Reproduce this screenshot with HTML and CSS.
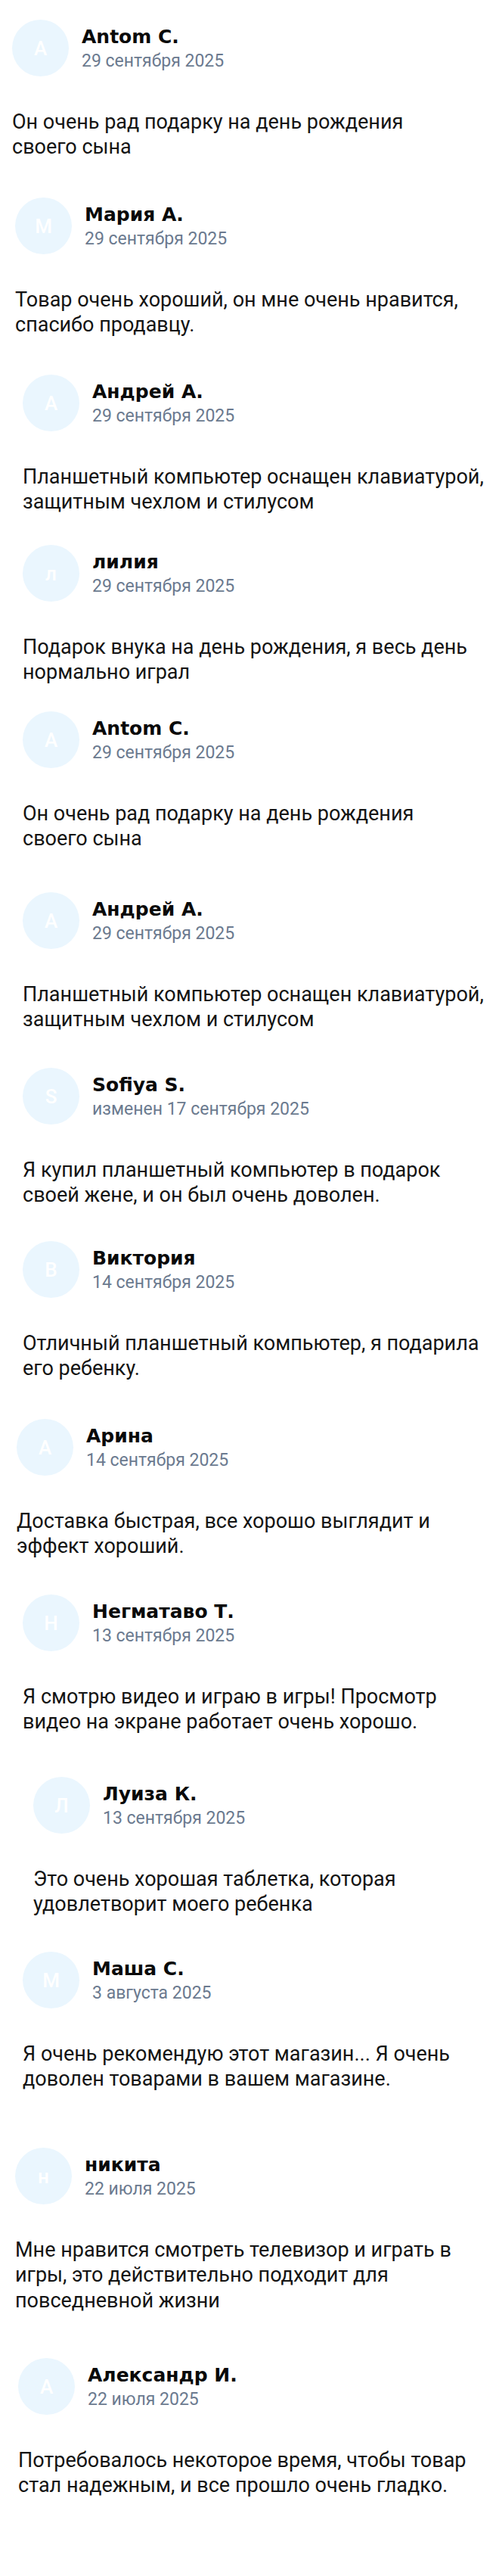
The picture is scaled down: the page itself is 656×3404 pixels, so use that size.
FILE: index.html
```html
<!DOCTYPE html>
<html lang="ru">
<head>
<meta charset="utf-8">
<title>Отзывы</title>
<link rel="stylesheet" href="styles.css">
</head>
<body>
<main class="sheet">
  <article class="review in-16 first">
    <header class="head"><div class="avatar">A</div><div class="meta"><div class="name">Antom C.</div><div class="date">29 сентября 2025</div></div></header>
    <p class="text">Он очень рад подарку на день рождения<br>своего сына</p>
  </article>
  <article class="review in-20 gap-50">
    <header class="head"><div class="avatar">М</div><div class="meta"><div class="name">Мария А.</div><div class="date">29 сентября 2025</div></div></header>
    <p class="text">Товар очень хороший, он мне очень нравится,<br>спасибо продавцу.</p>
  </article>
  <article class="review in-30 gap-48">
    <header class="head"><div class="avatar">А</div><div class="meta"><div class="name">Андрей А.</div><div class="date">29 сентября 2025</div></div></header>
    <p class="text">Планшетный компьютер оснащен клавиатурой,<br>защитным чехлом и стилусом</p>
  </article>
  <article class="review in-30 gap-40">
    <header class="head"><div class="avatar">л</div><div class="meta"><div class="name">лилия</div><div class="date">29 сентября 2025</div></div></header>
    <p class="text">Подарок внука на день рождения, я весь день<br>нормально играл</p>
  </article>
  <article class="review in-30 gap-34">
    <header class="head"><div class="avatar">A</div><div class="meta"><div class="name">Antom C.</div><div class="date">29 сентября 2025</div></div></header>
    <p class="text">Он очень рад подарку на день рождения<br>своего сына</p>
  </article>
  <article class="review in-30 gap-54">
    <header class="head"><div class="avatar">А</div><div class="meta"><div class="name">Андрей А.</div><div class="date">29 сентября 2025</div></div></header>
    <p class="text">Планшетный компьютер оснащен клавиатурой,<br>защитным чехлом и стилусом</p>
  </article>
  <article class="review in-30 gap-46">
    <header class="head"><div class="avatar">S</div><div class="meta"><div class="name">Sofiya S.</div><div class="date">изменен 17 сентября 2025</div></div></header>
    <p class="text">Я купил планшетный компьютер в подарок<br>своей жене, и он был очень доволен.</p>
  </article>
  <article class="review in-30 gap-44">
    <header class="head"><div class="avatar">В</div><div class="meta"><div class="name">Виктория</div><div class="date">14 сентября 2025</div></div></header>
    <p class="text">Отличный планшетный компьютер, я подарила<br>его ребенку.</p>
  </article>
  <article class="review in-22 gap-50">
    <header class="head"><div class="avatar">А</div><div class="meta"><div class="name">Арина</div><div class="date">14 сентября 2025</div></div></header>
    <p class="text">Доставка быстрая, все хорошо выглядит и<br>эффект хороший.</p>
  </article>
  <article class="review in-30 gap-46">
    <header class="head"><div class="avatar">Н</div><div class="meta"><div class="name">Негматаво Т.</div><div class="date">13 сентября 2025</div></div></header>
    <p class="text">Я смотрю видео и играю в игры! Просмотр<br>видео на экране работает очень хорошо.</p>
  </article>
  <article class="review in-44 gap-56">
    <header class="head"><div class="avatar">Л</div><div class="meta"><div class="name">Луиза К.</div><div class="date">13 сентября 2025</div></div></header>
    <p class="text">Это очень хорошая таблетка, которая<br>удовлетворит моего ребенка</p>
  </article>
  <article class="review in-30 gap-45">
    <header class="head"><div class="avatar">М</div><div class="meta"><div class="name">Маша С.</div><div class="date">3 августа 2025</div></div></header>
    <p class="text">Я очень рекомендую этот магазин... Я очень<br>доволен товарами в вашем магазине.</p>
  </article>
  <article class="review in-20 gap-74">
    <header class="head"><div class="avatar">н</div><div class="meta"><div class="name">никита</div><div class="date">22 июля 2025</div></div></header>
    <p class="text">Мне нравится смотреть телевизор и играть в<br>игры, это действительно подходит для<br>повседневной жизни</p>
  </article>
  <article class="review in-24 gap-59">
    <header class="head"><div class="avatar">А</div><div class="meta"><div class="name">Александр И.</div><div class="date">22 июля 2025</div></div></header>
    <p class="text">Потребовалось некоторое время, чтобы товар<br>стал надежным, и все прошло очень гладко.</p>
  </article>
</main>
</body>
</html>
```

FILE: styles.css
```css
html, body {
  margin: 0;
  padding: 0;
  background: #ffffff;
}

.sheet {
  width: 656px;
  display: flex;
  flex-direction: column;
}

.review {
  display: flex;
  flex-direction: column;
}

.first  { margin-top: 26px; }
.gap-34 { margin-top: 34.5px; }
.gap-40 { margin-top: 39.5px; }
.gap-44 { margin-top: 43.5px; }
.gap-45 { margin-top: 45.5px; }
.gap-46 { margin-top: 46.5px; }
.gap-48 { margin-top: 48.5px; }
.gap-50 { margin-top: 49.5px; }
.gap-54 { margin-top: 53.5px; }
.gap-56 { margin-top: 55.5px; }
.gap-59 { margin-top: 59px; }
.gap-74 { margin-top: 73.5px; }

.in-16 { padding-left: 16px; }
.in-20 { padding-left: 20px; }
.in-22 { padding-left: 22px; }
.in-24 { padding-left: 24px; }
.in-30 { padding-left: 30px; }
.in-44 { padding-left: 44px; }

.head {
  display: flex;
  align-items: flex-start;
  gap: 17px;
  height: 75px;
}

.avatar {
  width: 75px;
  height: 75px;
  border-radius: 50%;
  background: #eaf6fe;
  color: #ffffff;
  font-family: "Roboto", sans-serif;
  font-weight: 500;
  font-size: 26px;
  display: flex;
  align-items: center;
  justify-content: center;
  flex: none;
}

.meta {
  display: flex;
  flex-direction: column;
  padding-top: 8px;
}

.name {
  font-family: "DejaVu Sans", sans-serif;
  font-weight: 700;
  font-size: 25px;
  line-height: 30px;
  color: #0a0a0a;
}

.date {
  margin-top: 1px;
  font-family: "Roboto", sans-serif;
  font-size: 23px;
  line-height: 31px;
  color: #6b7a8f;
}

.text {
  margin: 43.5px 0 0;
  font-family: "Roboto", sans-serif;
  font-size: 27px;
  line-height: 33.5px;
  color: #141414;
}
```
